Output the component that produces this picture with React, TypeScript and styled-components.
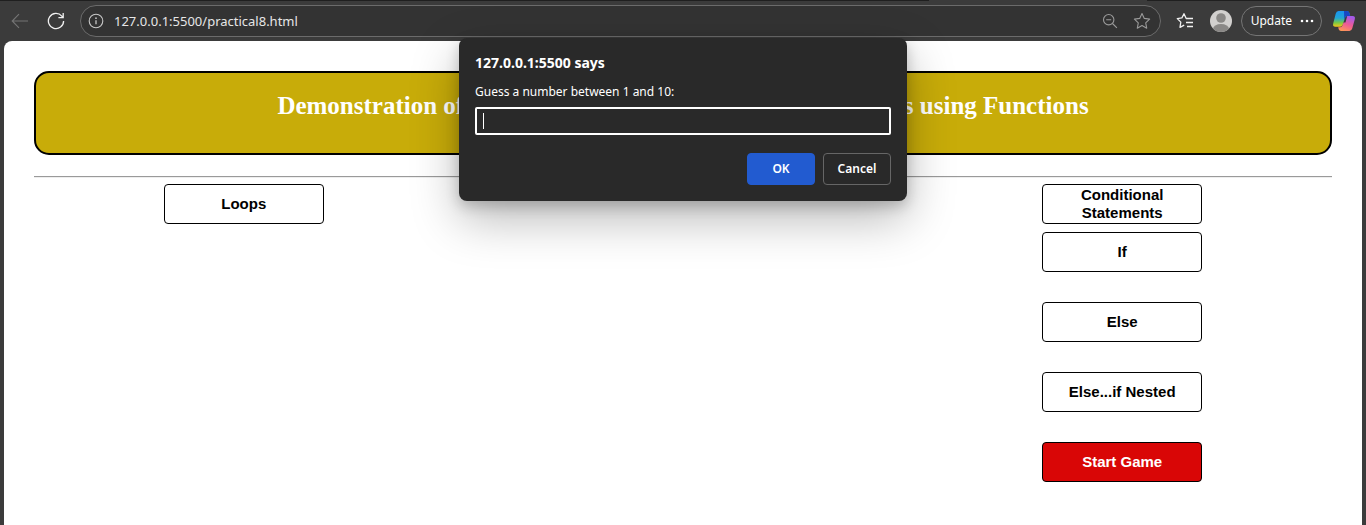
import React from "react";
import styled, { createGlobalStyle } from "styled-components";

const GlobalStyle = createGlobalStyle`
  * { box-sizing: border-box; }
  body { margin: 0; background: #3b3b3b; }
`;

const uiFont = `"Noto Sans", "Open Sans", sans-serif`;

const Browser = styled.div`
  display: flex;
  flex-direction: column;
  min-height: 100vh;
  background: #3b3b3b;
  font-family: ${uiFont};
`;

const TabStrip = styled.div`
  flex: none;
  height: 1px;
  padding-left: 68%;
  background: #1f1f1f;
`;

const ActiveTab = styled.div`
  width: 50%;
  height: 1px;
  background: #3b3b3b;
`;

const Toolbar = styled.header`
  display: flex;
  align-items: center;
  height: 40px;
  padding: 0 4px;
`;

const IconButton = styled.button<{ $size?: number; $tone?: string }>`
  display: flex;
  align-items: center;
  justify-content: center;
  flex: none;
  width: ${(p) => p.$size ?? 32}px;
  height: 32px;
  padding: 0;
  border: 0;
  background: none;
  color: ${(p) => p.$tone ?? "#f0f0f0"};
`;

const AddressBar = styled.div`
  display: flex;
  flex: 1;
  align-items: center;
  height: 32px;
  margin: 0 8px;
  padding: 0 2px 0 0;
  border: 1px solid #6b6b6b;
  border-radius: 16px;
  background: #333333;
`;

const AddressInput = styled.input`
  flex: 1;
  min-width: 0;
  padding: 0 0 0 3px;
  border: 0;
  outline: 0;
  background: none;
  color: #e6e6e6;
  font: 13px/20px ${uiFont};
`;

const NavGroup = styled.nav`
  display: flex;
  gap: 4px;
`;

const ToolGroup = styled.div`
  display: flex;
  align-items: center;
  gap: 4px;
`;

const UpdateButton = styled.button`
  display: flex;
  align-items: center;
  gap: 8px;
  height: 30px;
  padding: 0 7px 0 9px;
  border: 1px solid #757575;
  border-radius: 15px;
  background: none;
  color: #ffffff;
  font: 12px/16px ${uiFont};
`;

const Page = styled.main`
  flex: 1;
  margin: 0 4px;
  padding: 30px;
  border-radius: 8px 8px 0 0;
  background: #ffffff;
`;

const Banner = styled.div`
  height: 84px;
  padding: 18px 20px;
  border: 2px solid #000000;
  border-radius: 15px;
  background: #c8ac09;
`;

const Title = styled.h1`
  margin: 0;
  color: #ffffff;
  font: bold 25px/30px "Liberation Serif", serif;
  text-align: center;
  white-space: nowrap;
`;

const Divider = styled.hr`
  margin: 21px 0 6px;
  border: solid;
  border-width: 1px 0;
  border-color: #9a9a9a #eeeeee #eeeeee;
`;

const Columns = styled.div`
  display: flex;
  align-items: flex-start;
  justify-content: space-between;
  padding: 0 10%;
`;

const Column = styled.section`
  display: flex;
  flex-direction: column;
  gap: 8px;
`;

const ActionList = styled.div`
  display: flex;
  flex-direction: column;
  gap: 30px;
`;

const ActionButton = styled.button<{ $danger?: boolean }>`
  width: 160px;
  height: 40px;
  padding: 0 20px;
  border: 1px solid #000000;
  border-radius: 4px;
  background: ${(p) => (p.$danger ? "#d90606" : "#ffffff")};
  color: ${(p) => (p.$danger ? "#ffffff" : "#000000")};
  font: bold 15px/18px "Liberation Sans", sans-serif;
`;

const PromptLayer = styled.div`
  position: absolute;
  top: 38px;
  left: 0;
  right: 0;
  display: flex;
  justify-content: center;
  pointer-events: none;
`;

const Prompt = styled.form`
  display: flex;
  flex-direction: column;
  width: 448px;
  padding: 16px;
  border-radius: 8px;
  background: #292929;
  box-shadow: 0 18px 48px rgba(0, 0, 0, 0.28), 0 5px 14px rgba(0, 0, 0, 0.2);
  color: #ffffff;
  font-family: ${uiFont};
  pointer-events: auto;
`;

const PromptTitle = styled.h2`
  margin: 0 0 11px;
  font: bold 14px/18px ${uiFont};
`;

const PromptLabel = styled.label`
  margin-bottom: 6px;
  font: 12px/18px ${uiFont};
`;

const PromptInput = styled.input`
  height: 28px;
  padding: 0 6px;
  border: 2px solid #ffffff;
  border-radius: 2px;
  outline: 0;
  background: #292929 linear-gradient(#ffffff, #ffffff) 6px 50% / 1px 16px no-repeat;
  caret-color: transparent;
  color: #ffffff;
  font: 12px/18px ${uiFont};
`;

const PromptActions = styled.div`
  display: flex;
  justify-content: flex-end;
  gap: 8px;
  margin-top: 18px;
`;

const PromptButton = styled.button<{ $primary?: boolean }>`
  width: 68px;
  height: 32px;
  padding: 0;
  border: 1px solid ${(p) => (p.$primary ? "#225bd0" : "#666666")};
  border-radius: 4px;
  background: ${(p) => (p.$primary ? "#225bd0" : "#292929")};
  color: #ffffff;
  font: 600 12px/16px ${uiFont};
`;

const BackIcon = () => (
  <svg width="18" height="16" viewBox="0 0 18 16" fill="none" stroke="currentColor" strokeWidth="1.1">
    <path d="M17 8H1.2M8 1.2 1.2 8 8 14.8" />
  </svg>
);

const ReloadIcon = () => (
  <svg width="18" height="18" viewBox="0 0 18 18" fill="none" stroke="currentColor" strokeWidth="1.3">
    <path d="M16.6 9A7.6 7.6 0 1 1 14.8 4.1L15.9 5.4M16.2 1V5.6H11.4" />
  </svg>
);

const InfoIcon = () => (
  <svg width="16" height="16" viewBox="0 0 16 16" fill="none" stroke="currentColor" strokeWidth="1.1">
    <circle cx="8" cy="8" r="6.8" />
    <path d="M8 7.2v4" strokeWidth="1.3" />
    <circle cx="8" cy="5.2" r=".85" fill="currentColor" stroke="none" />
  </svg>
);

const ZoomOutIcon = () => (
  <svg width="16" height="16" viewBox="0 0 16 16" fill="none" stroke="currentColor" strokeWidth="1.1">
    <circle cx="6.7" cy="6.7" r="5.2" />
    <path d="M4.2 6.7h5M10.5 10.5l4.4 4.4" />
  </svg>
);

const StarIcon = () => (
  <svg width="18" height="18" viewBox="0 0 18 18" fill="none" stroke="currentColor" strokeWidth="1.1" strokeLinejoin="round">
    <path d="M9 1.5l2.3 4.9 5.3.7-3.9 3.7 1 5.4L9 13.6l-4.7 2.6 1-5.4L1.4 7.1l5.3-.7z" />
  </svg>
);

const FavoritesIcon = () => (
  <svg width="18" height="18" viewBox="0 0 18 18" fill="none" stroke="currentColor" strokeWidth="1.3" strokeLinejoin="round">
    <path d="M17 6.5H10.2L8 1.7 5.9 5.9 1.3 6.6l3.5 3.5L4 15.4l4.2-2.2M10 10.5h7M11 14.5h6" />
  </svg>
);

const AvatarIcon = () => (
  <svg width="22" height="22" viewBox="0 0 22 22">
    <defs>
      <clipPath id="avatar-clip"><circle cx="11" cy="11" r="11" /></clipPath>
    </defs>
    <g clipPath="url(#avatar-clip)">
      <rect width="22" height="22" fill="#d2d0ce" />
      <circle cx="11" cy="8" r="4.8" fill="#8a8886" />
      <ellipse cx="11" cy="19" rx="8" ry="5" fill="#8a8886" />
    </g>
  </svg>
);

const MoreIcon = () => (
  <svg width="14" height="4" viewBox="0 0 14 4" fill="currentColor">
    <circle cx="2" cy="2" r="1.3" />
    <circle cx="7" cy="2" r="1.3" />
    <circle cx="12" cy="2" r="1.3" />
  </svg>
);

const CopilotIcon = () => (
  <svg width="24" height="22" viewBox="0 0 24 22">
    <defs>
      <linearGradient id="copilot-left" x1="0" y1="0" x2="0" y2="1">
        <stop offset="0" stopColor="#1893f0" />
        <stop offset=".45" stopColor="#22a5d4" />
        <stop offset=".75" stopColor="#7ac943" />
        <stop offset="1" stopColor="#f5c518" />
      </linearGradient>
      <linearGradient id="copilot-right" x1=".6" y1="0" x2=".2" y2="1">
        <stop offset="0" stopColor="#a45ae8" />
        <stop offset=".5" stopColor="#ee5a96" />
        <stop offset="1" stopColor="#ff9a52" />
      </linearGradient>
    </defs>
    <path d="M6.5 1H15q1.7 0 2.3 1.7L18.2 6h-3q-1.6 0-2.2 1.8L10.7 15q-.7 1.7-2.5 1.7H3.5Q.4 16.7 1.2 13.5L3.7 3.7Q4.4 1 6.5 1z" fill="url(#copilot-left)" />
    <path d="M12 1h3q1.7 0 2.3 1.7L18.2 6h-3q-1.6 0-2.2 1.8L12.3 10z" fill="#1747c4" />
    <path d="M17.5 21H9q-1.700 0-2.300-1.700L6.200 17.200h2q1.800 0 2.500-2.200L11.500 12.500 13.500 12.500 15.200 6h5.300q3.100 0 2.300 3.200L20.300 18.300Q19.600 21 17.500 21z" fill="url(#copilot-right)" />
  </svg>
);

export default function App() {
  return (
    <>
      <GlobalStyle />
      <Browser>
        <TabStrip>
          <ActiveTab />
        </TabStrip>
        <Toolbar>
          <NavGroup>
            <IconButton aria-label="Back" $tone="#757575"><BackIcon /></IconButton>
            <IconButton aria-label="Reload"><ReloadIcon /></IconButton>
          </NavGroup>
          <AddressBar>
            <IconButton aria-label="Site information" $size={30} $tone="#c8c8c8"><InfoIcon /></IconButton>
            <AddressInput aria-label="Address" defaultValue="127.0.0.1:5500/practical8.html" />
            <IconButton aria-label="Zoom out" $tone="#9a9a9a"><ZoomOutIcon /></IconButton>
            <IconButton aria-label="Add to favorites" $tone="#9a9a9a"><StarIcon /></IconButton>
          </AddressBar>
          <ToolGroup>
            <IconButton aria-label="Favorites"><FavoritesIcon /></IconButton>
            <IconButton aria-label="Profile"><AvatarIcon /></IconButton>
            <UpdateButton>Update<MoreIcon /></UpdateButton>
            <IconButton aria-label="Copilot" $size={36}><CopilotIcon /></IconButton>
          </ToolGroup>
        </Toolbar>
        <Page>
          <Banner>
            <Title>Demonstration of nested Loops and Conditional Statements using Functions</Title>
          </Banner>
          <Divider />
          <Columns>
            <Column>
              <ActionButton>Loops</ActionButton>
            </Column>
            <Column>
              <ActionButton>Conditional Statements</ActionButton>
              <ActionList>
                <ActionButton>If</ActionButton>
                <ActionButton>Else</ActionButton>
                <ActionButton>Else...if Nested</ActionButton>
                <ActionButton $danger>Start Game</ActionButton>
              </ActionList>
            </Column>
          </Columns>
        </Page>
      </Browser>
      <PromptLayer>
        <Prompt role="dialog" aria-labelledby="prompt-title" onSubmit={(e) => e.preventDefault()}>
          <PromptTitle id="prompt-title">127.0.0.1:5500 says</PromptTitle>
          <PromptLabel htmlFor="guess">Guess a number between 1 and 10:</PromptLabel>
          <PromptInput id="guess" type="text" autoFocus autoComplete="off" />
          <PromptActions>
            <PromptButton type="submit" $primary>OK</PromptButton>
            <PromptButton type="button">Cancel</PromptButton>
          </PromptActions>
        </Prompt>
      </PromptLayer>
    </>
  );
}
